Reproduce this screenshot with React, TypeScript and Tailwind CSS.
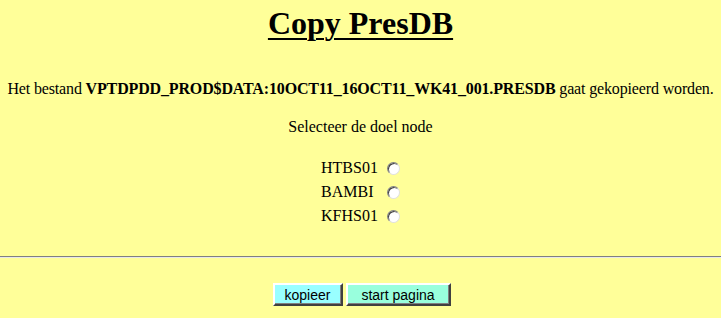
const nodes = ['HTBS01', 'BAMBI', 'KFHS01']

function Radio() {
  return (
    <span className="inline-block w-[13px] h-[13px] rounded-full bg-white border border-[#808080] border-r-[#e0e0e0] border-b-[#e0e0e0] shadow-[inset_1px_1px_0_#404040]" />
  )
}

function ClassicButton({ label, color, width }: { label: string; color: string; width: string }) {
  return (
    <button
      className={`${width} ${color} h-[23px] text-[14px] text-black leading-none border-2 border-t-white border-l-white border-r-[#404040] border-b-[#404040] shadow-[inset_-1px_-1px_0_#808080]`}
    >
      {label}
    </button>
  )
}

export default function App() {
  return (
    <div className="w-[721px] h-[318px] bg-[#ffff99] text-black font-['Liberation_Serif',serif] overflow-hidden">
      {/* Title */}
      <div className="pt-[5px] flex justify-center">
        <h1 className="text-[32px] font-bold underline underline-offset-[4px] decoration-[2px] leading-[36px]">Copy PresDB</h1>
      </div>

      {/* Message */}
      <p className="mt-[39px] text-center text-[16px] leading-[18px] tracking-[-0.15px] whitespace-nowrap">
        Het bestand <b>VPTDPDD_PROD$DATA:10OCT11_16OCT11_WK41_001.PRESDB</b> gaat gekopieerd worden.
      </p>

      <p className="mt-[20px] text-center text-[16px] leading-[18px]">Selecteer de doel node</p>

      {/* Node list */}
      <div className="mt-[20px] flex flex-col pl-[321px]">
        {nodes.map(n => (
          <div key={n} className="h-6 flex items-center text-[16px]">
            <span className="w-[66px]">{n}</span>
            <Radio />
          </div>
        ))}
      </div>

      {/* Divider */}
      <div className="mt-[28px] h-[2px] border-t border-t-[#808080] border-b border-b-[#e8e8e8]" />

      {/* Buttons */}
      <div className="mt-[25px] flex justify-center gap-[3px] pl-[2px] font-['Liberation_Sans',sans-serif]">
        <ClassicButton label="kopieer" color="bg-[#99ffff]" width="w-[70px]" />
        <ClassicButton label="start pagina" color="bg-[#99ffdd]" width="w-[105px]" />
      </div>
    </div>
  )
}
